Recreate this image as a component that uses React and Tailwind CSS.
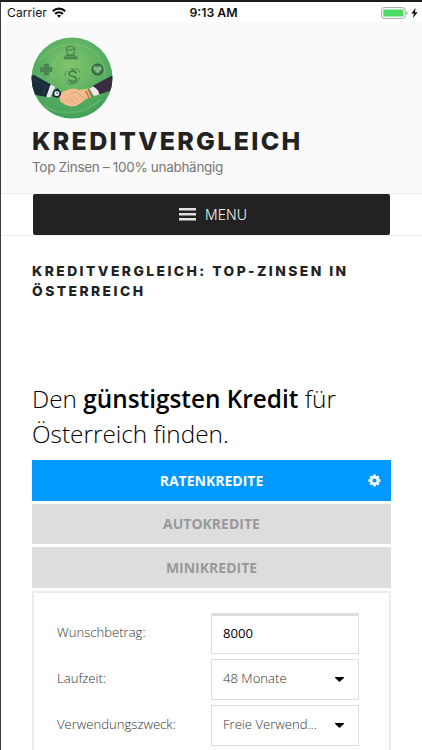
import { useState } from 'react';

const tabs = ['Ratenkredite', 'Autokredite', 'Minikredite'];

const selects = [
    { label: 'Laufzeit:', value: '48 Monate' },
    { label: 'Verwendungszweck:', value: 'Freie Verwend...' },
];

const StatusBar = () => (
    <div className="grid grid-cols-3 items-center h-5 pl-[6px] pr-1 bg-white text-[#111] font-['Inter',sans-serif]">
        <div className="flex items-center gap-[5px] pt-[1px]">
            <span className="text-[12.2px] leading-5">Carrier</span>
            <svg className="w-[14px] h-[11px] -mt-[2px]" viewBox="0 0 14 11" fill="none" stroke="#111" strokeWidth="2.2">
                <path d="M.8 4.2C4.3.8 9.7.8 13.2 4.2" />
                <path d="M3.1 6.9C5.3 4.8 8.7 4.8 10.9 6.9" />
                <path d="M7 10.8 4.9 8.6Q7 6.9 9.1 8.6Z" fill="#111" stroke="none" />
            </svg>
        </div>
        <span className="pl-[2px] pt-[1px] text-center text-[12.3px] leading-5 font-semibold">9:13 AM</span>
        <div className="flex items-center justify-end gap-[3px]">
            <svg className="w-[27px] h-3" viewBox="0 0 27 12">
                <rect x=".6" y=".6" width="23.6" height="10.8" rx="2.6" fill="#fff" stroke="#a3a7a3" />
                <rect x="2.3" y="2.4" width="20.2" height="7.2" rx="1" fill="#4cd964" />
                <path d="M25.3 4.2q1.4.4 1.4 1.8t-1.4 1.8z" fill="#a3a7a3" />
            </svg>
            <svg className="w-[7px] h-[10px]" viewBox="0 0 7 10" fill="#111">
                <path d="M4.6 0 .3 5.6h2.6L2 10l4.7-5.8H4z" />
            </svg>
        </div>
    </div>
);

const Logo = () => (
    <svg className="block w-[82px] h-[82px]" viewBox="0 0 82 82">
        <defs>
            <radialGradient id="field" cx=".48" cy=".36" r=".62">
                <stop offset="0" stopColor="#83c66c" />
                <stop offset=".5" stopColor="#63b565" />
                <stop offset="1" stopColor="#43a15a" />
            </radialGradient>
            <clipPath id="disc">
                <circle cx="41" cy="41" r="40.5" />
            </clipPath>
        </defs>
        <g clipPath="url(#disc)">
            <rect width="82" height="82" fill="url(#field)" />
            <g fill="none" stroke="#8ccb7c" strokeWidth="2" opacity=".3">
                <path d="M8 24C20 8 42 3 60 12" />
                <path d="M22 42C18 25 30 12 44 13" />
                <path d="M12 68c14 10 40 12 58-6" />
                <path d="M62 14c10 8 14 20 12 32" />
            </g>
            {/* person behind a desk */}
            <g fill="none" stroke="#4a8351" strokeWidth="1.2">
                <path d="M35.5 10.5q4-2.500 8 0v4q-1 4-4 4t-4-4z" />
                <path d="M35.5 12.8q4 1 8-1M33.5 22v-1.500q1-2.500 6-2.500t6.500 2.500V22" />
                <path d="M34 22.3l2-2.300h8l2 2.300" fill="#4a8351" />
            </g>
            <path d="M13.2 27h4.4v3.4H21v4.2h-3.4V38h-4.4v-3.4H9.5v-4.2h3.7z" fill="#4c8452" stroke="#467c4c" strokeWidth=".6" />
            <circle cx="66.5" cy="32.5" r="5.400" fill="#457a4b" stroke="#35593d" strokeWidth="1.2" />
            <path d="M66.5 36.5l-3.700-3.800c-1.700-2.500 1.600-5 3.700-2.300 2.100-2.700 5.400-.2 3.700 2.300z" fill="#82b886" />
            {/* coin */}
            <g fill="none" stroke="#457f4b">
                <path d="M37 32.500q-3 2-3 6.500M39 32h7q3 1 3 4M35 43.500l3 3.500h5q5-2 6-7" strokeWidth=".8" />
                <path d="M45.5 36.200c-2.500-3.500-7.800-2-7.400.8.500 3.200 7 1.400 7.200 5 .1 3.200-5.800 3.500-7.900.4" strokeWidth="1.700" />
                <path d="M42.3 32.500l-.3 2.500M41.200 44l-.3 2.500" strokeWidth="1.5" />
            </g>
            {/* handshake */}
            <path d="M-1 38.500 3 38l17 9.500-4.500 12.500L0 57z" fill="#182c3b" />
            <path d="M3 42l12 6.500-3 9" fill="none" stroke="#29424d" />
            <path d="M82 38 61.500 49 68 57.500l14-4.500z" fill="#3a2c40" />
            <path d="m19.500 47.500 4.500 2.200-4.700 10.800-4-.7z" fill="#e9edf0" />
            <path d="m58.500 51.500 4-2q5 3 6 8l-5.500 1.500z" fill="#f0eaed" />
            <path d="M28 59l4-4.500 6.500-2.500 5.500-.5 4.500 1.500 8-1.500 3.500 9-5 1.500-5 4-4.500 3-5 .5-6-1.500-5-3.500z" fill="#f2bc91" />
            <path d="m40 57 5-2.500 8 7M34 62l6 5M37.500 60l6.500 6.500M41.500 59l6.500 6" fill="none" stroke="#d99a72" strokeWidth=".8" />
            <path d="M54.500 54q3 3.500 3.500 8M57 52.500q3 3.500 4 8" fill="none" stroke="#b66f42" strokeWidth="1.4" />
            <path d="M22 59.500l5-8" stroke="#182b35" strokeWidth="2" />
            <circle cx="25.8" cy="56.5" r="3.400" fill="#edf4f5" stroke="#182b35" strokeWidth="1.8" />
            <path d="M25.8 54.500v2.200h1.600" fill="none" stroke="#182b35" strokeWidth=".6" />
        </g>
    </svg>
);

const Cog = ({ className }) => (
    <svg className={className} viewBox="-6.5 -6.5 13 13" fill="none" stroke="currentColor">
        <circle r="3.400" strokeWidth="2.600" />
        <path d="M0-6.100V-4M0 6.100V4M-6.100 0H-4M6.100 0H4M-4.200-4.200-3-3M4.200 4.200 3 3M-4.200 4.200-3 3M4.200-4.200 3-3" strokeWidth="2.500" />
    </svg>
);

const Header = () => (
    <header className="h-[172px] pl-[30px] pt-[15px] bg-[#fafafa] border-b border-[#eee] font-['Inter',sans-serif]">
        <Logo />
        <h1 className="mt-[7px] pl-px text-[25px] leading-[30px] font-extrabold tracking-[2.3px] text-[#222] uppercase whitespace-nowrap">
            Kreditvergleich
        </h1>
        <p className="mt-[2px] pl-px text-[13.5px] leading-[18px] tracking-[-0.31px] text-[#777] whitespace-nowrap">
            Top Zinsen – 100% unabhängig
        </p>
    </header>
);

const Field = ({ label, children }) => (
    <div className="flex items-center h-[41px]">
        <label className="w-[154px] text-[13.1px] text-[#333] font-light">{label}</label>
        {children}
    </div>
);

const App = () => {
    const [active, setActive] = useState(0);
    const [amount, setAmount] = useState('8000');

    return (
        <div className="h-[750px] overflow-hidden bg-white border-t-2 border-l border-t-[#1d1b1c] border-l-[#3c3c3e] font-['Open_Sans',sans-serif]">
            <StatusBar />
            <Header />
            <nav className="h-[42px] px-8 border-b border-[#eee]">
                <button className="flex items-center justify-center gap-[9px] w-[357px] h-[41px] pl-[3px] rounded-xs bg-[#222] text-[#eee] font-['Inter',sans-serif]">
                    <svg className="w-[17px] h-[13px]" viewBox="0 0 17 13" fill="#e2e2e2">
                        <path d="M0 0h17v2.5H0zM0 5h17v2.5H0zM0 10h17v2.5H0z" />
                    </svg>
                    <span className="text-[14px] font-light">MENU</span>
                </button>
            </nav>

            <main className="pl-[31px] pr-[31px]">
                <h2 className="mt-[26px] h-[38px] text-[13.8px] leading-[19.5px] font-extrabold tracking-[2.47px] text-[#222] uppercase font-['Inter',sans-serif] whitespace-nowrap">
                    Kreditvergleich: Top-Zinsen in<br />Österreich
                </h2>
                <p className="mt-[81px] h-[71px] text-[24.35px] leading-[35px] font-light text-black whitespace-nowrap">
                    Den <b className="font-semibold">günstigsten Kredit</b> für<br />Österreich finden.
                </p>

                <div className="mt-2 flex flex-col gap-[3px] w-[359px]">
                    {tabs.map((tab, i) => (
                        <button
                            key={tab}
                            onClick={() => setActive(i)}
                            className={`relative h-[40.5px] text-[14px] font-bold uppercase ${
                                i === active ? 'bg-[#0099ff] text-white' : 'bg-[#ddd] text-[#999]'
                            }`}
                        >
                            {tab}
                            {i === active && <Cog className="absolute right-[10px] top-[14px] w-[13px] h-[13px]" />}
                        </button>
                    ))}
                </div>

                <form className="mt-[3px] w-[359px] h-[200px] pl-[23px] pt-5 flex flex-col gap-[5px] border-2 border-[#ececec]">
                    <Field label="Wunschbetrag:">
                        <input
                            value={amount}
                            onChange={(e) => setAmount(e.target.value)}
                            className="w-[148px] h-[41px] pl-[11px] pb-[3px] text-[13.1px] text-black border border-t-[3px] border-[#ddd] outline-none"
                        />
                    </Field>
                    {selects.map((s) => (
                        <Field key={s.label} label={s.label}>
                            <button type="button" className="flex items-center justify-between w-[148px] h-[41px] pl-[11px] pr-[14px] border border-[#ddd] text-[13.1px] text-[#333] font-light">
                                {s.value}
                                <svg className="w-[9px] h-[5px]" viewBox="0 0 9 5">
                                    <path d="M0 0h9v.8L4.5 5 0 .8z" />
                                </svg>
                            </button>
                        </Field>
                    ))}
                </form>
            </main>
        </div>
    );
};

export default App;
